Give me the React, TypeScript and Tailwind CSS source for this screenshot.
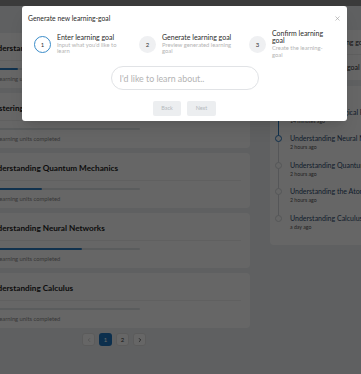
import { X, ChevronLeft, ChevronRight } from "lucide-react";

const courses = [
  { title: "Understanding Logical Reasoning", done: "1/5", pct: 20 },
  { title: "Mastering Linear Algebra", done: "0/5", pct: 0 },
  { title: "Understanding Quantum Mechanics", done: "2/6", pct: 36 },
  { title: "Understanding Neural Networks", done: "3/5", pct: 62 },
  { title: "Understanding Calculus", done: "0/5", pct: 0 },
];

const history = [
  { title: "Understanding Logical Reasoning", time: "14 minutes ago", active: true },
  { title: "Understanding Neural Networks", time: "2 hours ago", active: true },
  { title: "Understanding Quantum Mechanics", time: "2 hours ago", active: false },
  { title: "Understanding the Atom", time: "2 hours ago", active: false },
  { title: "Understanding Calculus", time: "a day ago", active: false },
];

const steps = [
  { n: 1, title: "Enter learning goal", desc: "Input what you'd like to learn", w: "w-[105px]", tw: "w-[64px]" },
  { n: 2, title: "Generate learning goal", desc: "Preview generated learning goal", w: "w-[110px]", tw: "w-[72px]" },
  { n: 3, title: "Confirm learning goal", desc: "Create the learning-goal", w: "w-[80px]", tw: "w-[54px]" },
];

const App = () => {
  return (
    <div className="relative h-[374px] w-[361px] overflow-hidden bg-[#eef0f3] font-['Lato',sans-serif]">
      <div className="h-[6px] bg-[#939393]" />
      <div className="flex gap-[20px]">
        {/* course list */}
        <div className="ml-[-22px] mt-[27px] flex w-[272px] shrink-0 flex-col">
          <div className="flex flex-col gap-[5px]">
            {courses.map((c) => (
              <div key={c.title} className="h-[55px] rounded-[4px] bg-white px-[9px] pt-[9px]">
                <div className="h-[19px] border-b border-[#f1f1f1] text-[8.2px] leading-[12px] font-bold whitespace-nowrap text-[#1e1e1e]">
                  {c.title}
                </div>
                <div className="mt-[7px] h-[2px] w-[153px] rounded-full bg-[#e2e5e9]">
                  <div className="h-[2px] rounded-full bg-[#2a7bc0]" style={{ width: `${c.pct}%` }} />
                </div>
                <div className="mt-[5px] text-[5.8px] leading-[8px] whitespace-nowrap text-[#8c8c8c]">
                  {c.done} learning units completed
                </div>
              </div>
            ))}
          </div>
          <div className="mt-[5px] flex justify-center gap-[4px]">
            <div className="flex h-[13px] w-[13px] items-center justify-center rounded-[3px] border border-[#e3e3e3] bg-white text-[#c4c4c4]">
              <ChevronLeft size={6} strokeWidth={3} />
            </div>
            <div className="flex h-[13px] w-[13px] items-center justify-center rounded-[3px] bg-[#1f76c0] text-[6px] text-white">1</div>
            <div className="flex h-[13px] w-[13px] items-center justify-center rounded-[3px] border border-[#e3e3e3] bg-white text-[6px] text-[#333]">2</div>
            <div className="flex h-[13px] w-[13px] items-center justify-center rounded-[3px] border border-[#e3e3e3] bg-white text-[#333]">
              <ChevronRight size={6} strokeWidth={3} />
            </div>
          </div>
        </div>

        {/* right column */}
        <div className="mt-[24px] flex w-[140px] shrink-0 flex-col gap-[6px]">
          <div className="rounded-[4px] bg-white pl-[14px] text-[7px] text-[#333]">
            <div className="flex h-[25px] items-center border-b border-[#eee] whitespace-nowrap">Generate new learning goal</div>
            <div className="flex h-[25px] items-center whitespace-nowrap">Regenerate learning goal</div>
          </div>
          <div className="rounded-[4px] bg-white px-[5px] pt-[22px] pb-[5px]">
            {history.map((h, i) => (
              <div key={h.title} className="relative flex h-[26.4px] gap-[8px]">
                {i < history.length - 1 && (
                  <div
                    className={`absolute left-[3px] top-[5px] h-[26.4px] w-[1px] ${i === 0 ? "bg-[#2a7bc0]" : "bg-[#d5d8dc]"}`}
                  />
                )}
                <div
                  className={`relative mt-[1px] h-[7px] w-[7px] shrink-0 rounded-full border bg-white ${h.active ? "border-[1.5px] border-[#2a7bc0]" : "border-[#d5d8dc]"}`}
                />
                <div className="whitespace-nowrap">
                  <div className="text-[7px] leading-[9px] text-[#2d4b6e]">{h.title}</div>
                  <div className="text-[5.2px] leading-[8px] text-[#555]">{h.time}</div>
                </div>
              </div>
            ))}
          </div>
        </div>
      </div>

      {/* backdrop */}
      <div className="absolute inset-0 bg-black/60" />

      {/* modal */}
      <div className="absolute left-[22px] top-[6px] h-[115px] w-[325px] rounded-[3px] bg-white shadow-lg">
        <div className="flex items-center justify-between pl-[6px] pr-[6px] pt-[7px]">
          <div className="text-[6.8px] leading-[10px] text-[#2b2b2b]">Generate new learning-goal</div>
          <X size={7} className="text-[#9a9a9a]" />
        </div>
        <div className="mt-[7px] flex pl-[12px]">
          {steps.map((s) => (
            <div key={s.n} className={`flex items-center gap-[6px] ${s.w}`}>
              <div
                className={`flex h-[17px] w-[17px] shrink-0 items-center justify-center rounded-full text-[6px] ${s.n === 1 ? "border border-[#3a8cc9] bg-white text-[#333]" : "bg-[#eff0f2] text-[#333]"}`}
              >
                {s.n}
              </div>
              <div className={s.tw}>
                <div className="text-[7px] leading-[7px] text-[#2b2b2b]">{s.title}</div>
                <div className="mt-[1px] text-[5.8px] leading-[6.5px] text-[#b4b4b4]">{s.desc}</div>
              </div>
            </div>
          ))}
        </div>
        <div className="mt-[8px] flex justify-center">
          <input
            className="h-[24px] w-[148px] rounded-full border border-[#e1e3e6] px-[8px] text-[8.8px] text-[#333] outline-none placeholder:text-[#b3b3b3]"
            placeholder="I'd like to learn about.."
          />
        </div>
        <div className="mt-[11px] flex justify-center gap-[6px]">
          <button className="h-[15px] w-[28px] rounded-[2px] bg-[#eceef0] text-[5.5px] text-[#b5b9bd]">Back</button>
          <button className="h-[15px] w-[29px] rounded-[2px] bg-[#eceef0] text-[5.5px] text-[#b5b9bd]">Next</button>
        </div>
      </div>
    </div>
  );
};

export default App;
